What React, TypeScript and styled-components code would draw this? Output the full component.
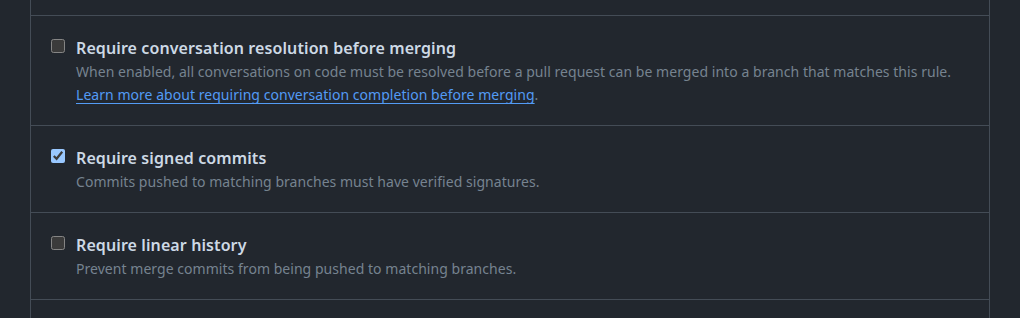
import React from 'react';
import styled, {createGlobalStyle} from 'styled-components';

const GlobalStyle = createGlobalStyle`
  html, body {
    margin: 0;
    padding: 0;
    background: #22272e;
    color-scheme: dark;
  }
  body {
    font-family: "Noto Sans", "Open Sans", sans-serif;
    overflow: hidden;
  }
`

const Panel = styled.div`
  width: 960px;
  margin-left: 30px;
  box-sizing: border-box;
  border-left: 1px solid #444c56;
  border-right: 1px solid #444c56;
  height: 318px;
  overflow: hidden;
`

const Rule = styled.div<{clipped?: boolean}>`
  display: flex;
  gap: 11px;
  padding: 20px 20px 19px 20px;
  border-top: ${props => props.clipped ? 'none' : '1px solid #444c56'};
  height: ${props => props.clipped ? '15px' : 'auto'};
  box-sizing: ${props => props.clipped ? 'border-box' : 'content-box'};
  ${props => props.clipped && 'padding: 0;'}
`

const Check = styled.input`
  width: 14px;
  height: 14px;
  margin: 3px 0 0 0;
  flex-shrink: 0;
`

const Body = styled.div`
  display: flex;
  flex-direction: column;
`

const Title = styled.label`
  font-size: 16px;
  font-weight: 600;
  line-height: 24px;
  letter-spacing: 0.1px;
  color: #cdd9e5;
`

const Note = styled.p`
  margin: 0;
  font-size: 14px;
  line-height: 23px;
  letter-spacing: 0.04px;
  color: #768390;
`

const Link = styled.a`
  color: #539bf5;
  text-decoration: underline;
  text-underline-offset: 3px;
`

type RuleItem = {
  title: string
  checked: boolean
  note: string
  link?: string
}

const rules: RuleItem[] = [
  {
    title: 'Require conversation resolution before merging',
    checked: false,
    note: 'When enabled, all conversations on code must be resolved before a pull request can be merged into a branch that matches this rule.',
    link: 'Learn more about requiring conversation completion before merging',
  },
  {
    title: 'Require signed commits',
    checked: true,
    note: 'Commits pushed to matching branches must have verified signatures.',
  },
  {
    title: 'Require linear history',
    checked: false,
    note: 'Prevent merge commits from being pushed to matching branches.',
  },
]

export default function App() {
  return (
    <>
      <GlobalStyle/>
      <Panel>
        <Rule clipped/>
        {rules.map((rule, i) => (
          <Rule key={i}>
            <Check type="checkbox" defaultChecked={rule.checked} id={'rule-' + i}/>
            <Body>
              <Title htmlFor={'rule-' + i}>{rule.title}</Title>
              <Note>{rule.note}</Note>
              {rule.link && (
                <Note>
                  <Link href="#">{rule.link}</Link>.
                </Note>
              )}
            </Body>
          </Rule>
        ))}
        <Rule/>
      </Panel>
    </>
  );
}
